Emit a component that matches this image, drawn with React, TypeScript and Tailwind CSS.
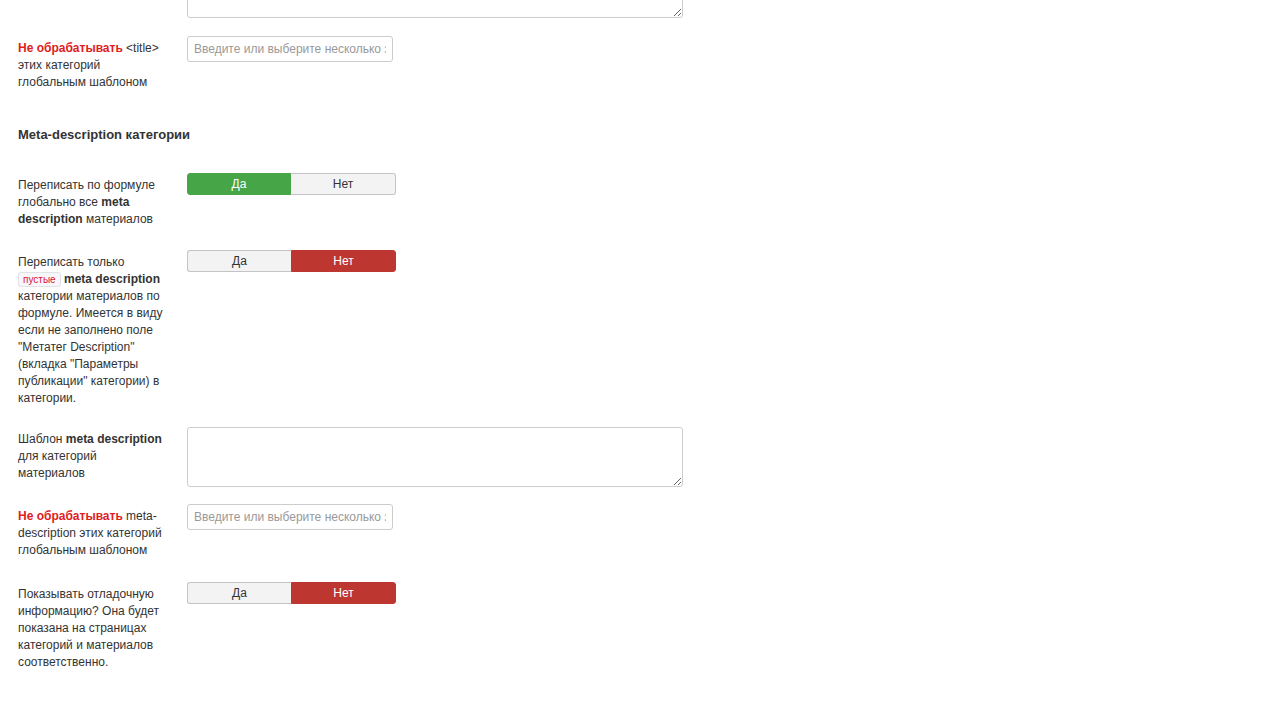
import type { ReactNode } from 'react';

const font = { fontFamily: '"Liberation Sans", Arial, sans-serif' };

function Row({ label, children, className = 'mb-[18px]' }: { label: ReactNode; children: ReactNode; className?: string }) {
  return (
    <div className={`flex items-start ${className}`}>
      <div className="w-[169px] shrink-0 pr-[21px] pt-[4px] pb-[4px] text-[12px] leading-[17px] text-[#333]">{label}</div>
      <div>{children}</div>
    </div>
  );
}

function Toggle({ yes }: { yes: boolean }) {
  return (
    <div className="flex w-[209px] h-[22px] text-[12px] leading-[20px] text-center">
      <div
        className={`w-[104px] rounded-l-[3px] border ${
          yes ? 'bg-[#46a546] border-[#46a546] text-white' : 'bg-[#f3f3f3] border-[#c4c4c4] border-r-0 text-[#333]'
        }`}
      >
        Да
      </div>
      <div
        className={`flex-1 rounded-r-[3px] border ${
          yes ? 'bg-[#f3f3f3] border-[#c4c4c4] border-l-0 text-[#333]' : 'bg-[#bd362f] border-[#bd362f] text-white'
        }`}
      >
        Нет
      </div>
    </div>
  );
}

function TagInput() {
  return (
    <input
      type="text"
      placeholder="Введите или выберите несколько значений"
      className="block w-[206px] h-[26px] px-[6px] border border-[#ccc] rounded-[3px] bg-white text-[12px] text-[#333] placeholder:text-[#999] outline-none"
      style={font}
    />
  );
}

function Area() {
  return (
    <textarea
      className="block w-[496px] h-[60px] border border-[#ccc] rounded-[3px] bg-white px-[6px] py-[4px] text-[12px] outline-none"
      style={font}
    />
  );
}

const Red = ({ children }: { children: ReactNode }) => <b className="text-[#e0201c]">{children}</b>;

export default function App() {
  return (
    <div className="min-h-screen bg-white pl-[18px] overflow-hidden" style={font}>
      <div className="-mt-[42px] mb-[18px] pl-[169px]">
        <Area />
      </div>

      <Row label={<><Red>Не обрабатывать</Red> &lt;title&gt; этих категорий глобальным шаблоном</>}>
        <TagInput />
      </Row>

      <h3 className="mt-[31px] mb-[29px] text-[13px] leading-[18px] font-bold text-[#333]">Meta-description категории</h3>

      <Row label={<>Переписать по формуле глобально все <b>meta description</b> материалов</>}>
        <Toggle yes />
      </Row>

      <Row
        className="mb-[16px]"
        label={
          <>
            Переписать только{' '}
            <code
              className="px-[4px] py-[1px] text-[10px] leading-[10px] text-[#dd1144] bg-[#f7f7f9] border border-[#e1e1e8] rounded-[3px]"
              style={font}
            >
              пустые
            </code>{' '}
            <b>meta description</b> категории материалов по формуле. Имеется в виду если не заполнено поле "Метатег Description"
            (вкладка "Параметры публикации" категории) в категории.
          </>
        }
      >
        <Toggle yes={false} />
      </Row>

      <Row className="mb-[17px]" label={<>Шаблон <b>meta description</b> для категорий материалов</>}>
        <Area />
      </Row>

      <Row className="mb-[19px]" label={<><Red>Не обрабатывать</Red> meta-description этих категорий глобальным шаблоном</>}>
        <TagInput />
      </Row>

      <Row label={<>Показывать отладочную информацию? Она будет показана на страницах категорий и материалов соответственно.</>}>
        <Toggle yes={false} />
      </Row>
    </div>
  );
}
